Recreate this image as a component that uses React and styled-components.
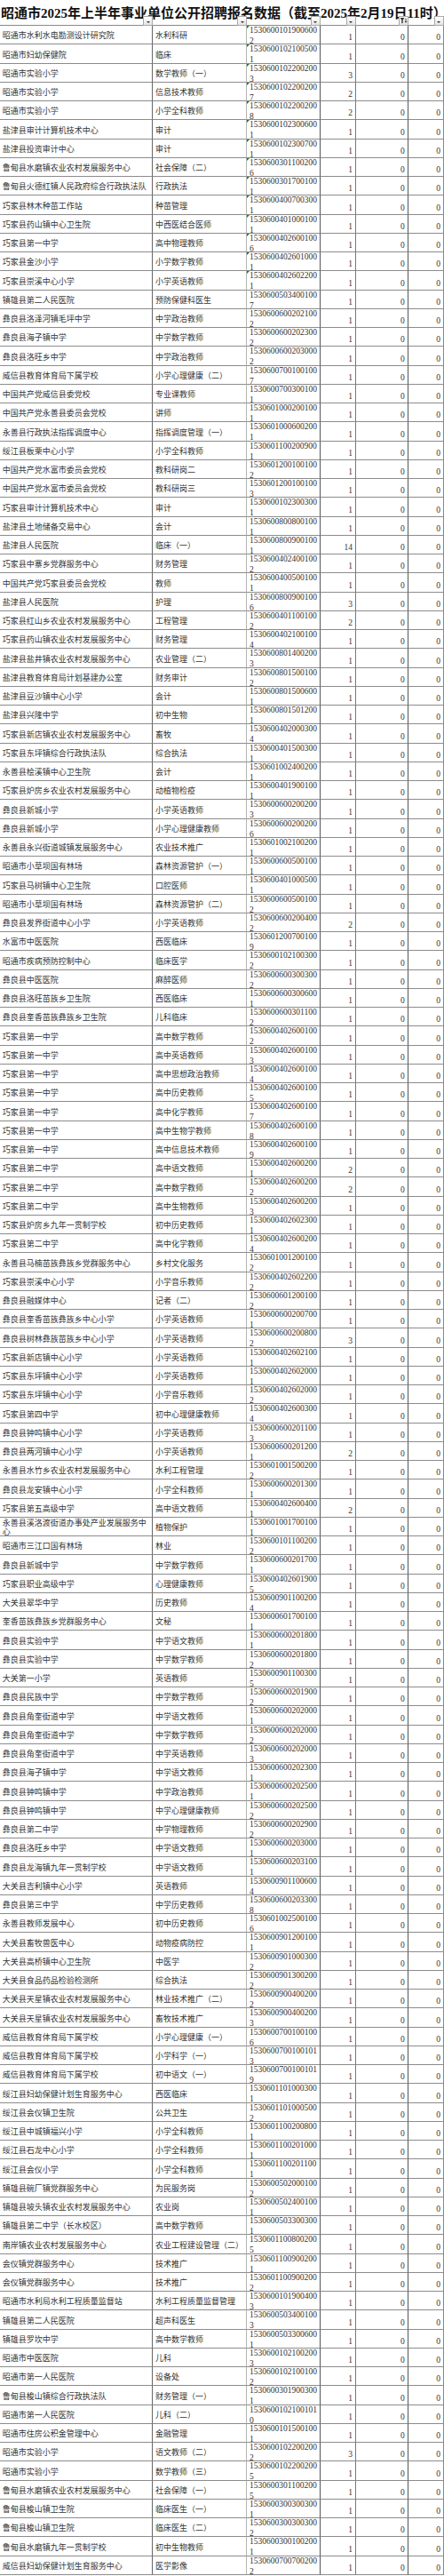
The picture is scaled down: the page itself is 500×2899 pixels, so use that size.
import React from 'react'
import styled, { createGlobalStyle } from 'styled-components'

const COLUMNS = '172.3px 106px 82.4px 40.3px 58.7px 40.3px'
const ROW_HEIGHT = '21.26px'

const RAW = `昭通市水利水电勘测设计研究院|水利科研|15306001019006002|1
昭通市妇幼保健院|临床|15306001021005001|1
昭通市实验小学|数学教师（一）|15306001022002003|3
昭通市实验小学|信息技术教师|15306001022002007|2
昭通市实验小学|小学全科教师|15306001022002008|2
盐津县审计计算机技术中心|审计|15306001023006001|1
盐津县投资审计中心|审计|15306001023007001|1
鲁甸县水磨镇农业农村发展服务中心|社会保障（二）|15306003011002006|1
鲁甸县火德红镇人民政府综合行政执法队|行政执法|15306003017001001|1
巧家县林木种苗工作站|种苗管理|15306004007003001|1
巧家县药山镇中心卫生院|中西医结合医师|15306004010001001|1
巧家县第一中学|高中物理教师|15306004026001006|1
巧家县金沙小学|小学数学教师|15306004026010001|1
巧家县崇溪中心小学|小学英语教师|15306004026022001|1
镇雄县第二人民医院|预防保健科医生|15306005034001007|1
彝良县洛泽河镇毛坪中学|中学政治教师|15306006002021002|1
彝良县海子镇中学|中学数学教师|15306006002023002|1
彝良县洛旺乡中学|中学政治教师|15306006002030002|1
威信县教育体育局下属学校|小学心理健康（二）|15306007001001007|1
中国共产党威信县委党校|专业课教师|15306007003001001|1
中国共产党永善县委员会党校|讲师|15306010002001001|1
永善县行政执法指挥调度中心|指挥调度管理（一）|15306010006002001|1
绥江县板栗中心小学|小学全科教师|15306011002009001|1
中国共产党水富市委员会党校|教科研岗二|15306012001001002|1
中国共产党水富市委员会党校|教科研岗三|15306012001001003|1
巧家县审计计算机技术中心|审计|15306001023003001|1
盐津县土地储备交易中心|会计|15306008008001001|1
盐津县人民医院|临床（一）|15306008009001001|14
巧家县中寨乡党群服务中心|财务管理|15306004024001002|1
中国共产党巧家县委员会党校|教师|15306004005001001|1
盐津县人民医院|护理|15306008009001006|3
巧家县红山乡农业农村发展服务中心|工程管理|15306004011001002|2
巧家县药山镇农业农村发展服务中心|财务管理|15306004021001004|1
盐津县盐井镇农业农村发展服务中心|农业管理（二）|15306008014002003|1
盐津县教育体育局计划基建办公室|财务审计|15306008015001002|1
盐津县豆沙镇中心小学|会计|15306008015006001|1
盐津县兴隆中学|初中生物|15306008015012001|1
巧家县新店镇农业农村发展服务中心|畜牧|15306004020003004|1
巧家县东坪镇综合行政执法队|综合执法|15306004015003001|1
永善县桧溪镇中心卫生院|会计|15306010024002001|1
巧家县炉房乡农业农村发展服务中心|动植物检疫|15306004019001001|1
彝良县新城小学|小学英语教师|15306006002002003|1
彝良县新城小学|小学心理健康教师|15306006002002006|1
永善县永兴街道城镇发展服务中心|农业技术推广|15306010021002001|1
昭通市小草坝国有林场|森林资源管护（一）|15306006005001001|1
巧家县马树镇中心卫生院|口腔医师|15306004010005001|1
昭通市小草坝国有林场|森林资源管护（二）|15306006005001002|1
彝良县发界街道中心小学|小学英语教师|15306006002004002|2
水富市中医医院|西医临床|15306012007001009|1
昭通市疾病预防控制中心|临床医学|15306001021003002|1
彝良县中医医院|麻醉医师|15306006003003002|1
彝良县洛旺苗族乡卫生院|西医临床|15306006003006001|1
彝良县奎香苗族彝族乡卫生院|儿科临床|15306006003011002|1
巧家县第一中学|高中数学教师|15306004026001002|1
巧家县第一中学|高中英语教师|15306004026001003|1
巧家县第一中学|高中思想政治教师|15306004026001004|1
巧家县第一中学|高中历史教师|15306004026001005|1
巧家县第一中学|高中化学教师|15306004026001007|1
巧家县第一中学|高中生物学教师|15306004026001008|1
巧家县第一中学|高中信息技术教师|15306004026001009|1
巧家县第二中学|高中语文教师|15306004026002001|2
巧家县第二中学|高中数学教师|15306004026002002|2
巧家县第二中学|高中生物教师|15306004026002003|1
巧家县炉房乡九年一贯制学校|初中历史教师|15306004026023001|1
巧家县第二中学|高中化学教师|15306004026002004|1
永善县马楠苗族彝族乡党群服务中心|乡村文化服务|15306010012001002|1
巧家县崇溪中心小学|小学音乐教师|15306004026022002|1
彝良县融媒体中心|记者（二）|15306006012001002|1
彝良县奎香苗族彝族乡中心小学|小学英语教师|15306006002007001|1
彝良县树林彝族苗族乡中心小学|小学英语教师|15306006002008002|3
巧家县新店镇中心小学|小学英语教师|15306004026021001|1
巧家县东坪镇中心小学|小学英语教师|15306004026020001|1
巧家县东坪镇中心小学|小学音乐教师|15306004026020002|1
巧家县第四中学|初中心理健康教师|15306004026003004|1
彝良县钟鸣镇中心小学|小学英语教师|15306006002011003|1
彝良县两河镇中心小学|小学英语教师|15306006002012001|2
永善县水竹乡农业农村发展服务中心|水利工程管理|15306010015002002|1
彝良县龙安镇中心小学|小学全科教师|15306006002013001|1
巧家县第五高级中学|高中语文教师|15306004026004001|2
永善县溪洛渡街道办事处产业发展服务中心|植物保护|15306010017001001|1
昭通市三江口国有林场|林业|15306001011002002|1
彝良县新城中学|中学数学教师|15306006002017001|1
巧家县职业高级中学|心理健康教师|15306004026019005|1
大关县翠华中学|历史教师|15306009011002004|1
奎香苗族彝族乡党群服务中心|文秘|15306006017001001|1
彝良县实验中学|中学语文教师|15306006002018001|1
彝良县实验中学|中学数学教师|15306006002018002|1
大关第一小学|英语教师|15306009011003005|1
彝良县民族中学|中学数学教师|15306006002019002|1
彝良县角奎街道中学|中学语文教师|15306006002020001|1
彝良县角奎街道中学|中学数学教师|15306006002020002|1
彝良县角奎街道中学|中学英语教师|15306006002020003|1
彝良县海子镇中学|中学语文教师|15306006002023001|1
彝良县钟鸣镇中学|中学政治教师|15306006002025001|1
彝良县钟鸣镇中学|中学心理健康教师|15306006002025002|1
彝良县第二中学|中学物理教师|15306006002029002|1
彝良县洛旺乡中学|中学语文教师|15306006002030001|1
彝良县龙海镇九年一贯制学校|中学语文教师|15306006002031001|1
大关县吉利镇中心小学|英语教师|15306009011006004|1
彝良县第三中学|中学历史教师|15306006002033008|1
永善县教师发展中心|初中历史教师|15306010025001006|1
大关县畜牧兽医中心|动物疫病防控|15306009012001001|1
大关县高桥镇中心卫生院|中医学|15306009010003002|1
大关县食品药品检验检测所|综合执法|15306009013002002|1
大关县天星镇农业农村发展服务中心|林业技术推广（二）|15306009004002002|1
大关县天星镇农业农村发展服务中心|畜牧技术推广|15306009004002003|1
威信县教育体育局下属学校|小学心理健康（一）|15306007001001006|1
威信县教育体育局下属学校|小学科学（一）|15306007001001013|1
威信县教育体育局下属学校|初中语文（一）|15306007001001019|1
绥江县妇幼保健计划生育服务中心|西医临床|15306011010003001|1
绥江县会仪镇卫生院|公共卫生|15306011010005002|1
绥江县中城镇福兴小学|小学全科教师|15306011002008001|1
绥江县石龙中心小学|小学全科教师|15306011002010001|1
绥江县会仪小学|小学全科教师|15306011002011001|1
镇雄县碗厂镇党群服务中心|为民服务岗|15306005020001002|1
镇雄县坡头镇农业农村发展服务中心|农业岗|15306005024001001|1
镇雄县第二中学（长水校区）|高中数学教师|15306005033003001|1
南岸镇农业农村发展服务中心|农业工程建设管理（二）|15306011008002005|1
会仪镇党群服务中心|技术推广|15306011009002001|1
会仪镇党群服务中心|技术推广|15306011009002002|1
昭通市水利局水利工程质量监督站|水利工程质量监督管理|15306001019004003|1
镇雄县第二人民医院|超声科医生|15306005034001003|1
镇雄县罗坎中学|高中数学教师|15306005033006001|1
昭通市中医医院|儿科|15306001021002003|1
昭通市第一人民医院|设备处|15306001021001002|1
鲁甸县梭山镇综合行政执法队|财务管理（一）|15306003019003001|1
昭通市第一人民医院|儿科（二）|15306001021001010|1
昭通市住房公积金管理中心|金融管理|15306001015001001|1
昭通市实验小学|语文教师（二）|15306001022002002|3
昭通市实验小学|数学教师（三）|15306001022002005|1
鲁甸县水磨镇农业农村发展服务中心|社会保障（一）|15306003011002005|1
鲁甸县梭山镇卫生院|临床医生（一）|15306003003003001|1
鲁甸县梭山镇卫生院|临床医生（二）|15306003003003002|1
鲁甸县水磨镇九年一贯制学校|初中生物教师|15306003001002001|1
威信县妇幼保健计划生育服务中心|医学影像|15306007007002002|1`

const ROWS = RAW.split('\n').map(line => {
  const [unit, post, code, plan] = line.split('|')
  return { unit, post, code, plan }
})

// the first 14 codes still carry excel's "number stored as text" marker
const FLAGGED = 14

const GlobalStyle = createGlobalStyle`
  html, body {
    margin: 0;
    padding: 0;
    background: #fff;
  }
  body {
    font-family: "Liberation Serif", "Noto Sans CJK SC", serif;
    color: #222;
  }
`

const Sheet = styled.div`
  width: 500px;
  overflow: hidden;
`

const HeaderRow = styled.div`
  display: grid;
  grid-template-columns: ${COLUMNS};
  grid-template-rows: 29px;
  box-sizing: border-box;
  height: 29px;
  border-bottom: 1px solid #8a8a8a;
`

const Title = styled.h1`
  grid-column: 1 / -1;
  grid-row: 1;
  margin: 0;
  padding: 6px 0 0 1px;
  font-family: "Liberation Serif", "Noto Sans CJK SC", serif;
  font-size: 15px;
  line-height: 18px;
  font-weight: 700;
  color: #111;
  white-space: nowrap;
`

const FilterButton = styled.div`
  grid-column: ${p => p.$col};
  grid-row: 1;
  justify-self: end;
  align-self: end;
  box-sizing: border-box;
  width: 11px;
  height: 11px;
  border: 1px solid #a9a9a9;
  background: linear-gradient(#ffffff, #e4e4e4);
  display: flex;
  align-items: center;
  justify-content: center;

  &::after {
    content: ${p => (p.$active ? 'none' : "''")};
    margin-top: 2px;
    border-left: 2.5px solid transparent;
    border-right: 2.5px solid transparent;
    border-top: 2.5px solid #333;
  }
`

const Body = styled.div`
  display: flex;
  flex-direction: column;
`

const Row = styled.div`
  display: grid;
  grid-template-columns: ${COLUMNS};
  height: ${ROW_HEIGHT};
`

const BaseCell = styled.div`
  box-sizing: border-box;
  height: ${ROW_HEIGHT};
  overflow: hidden;
  border-bottom: 1px solid #8c8c8c;
  border-right: 1px solid ${p => p.$line || '#666'};
`

const TextCell = styled(BaseCell)`
  display: flex;
  align-items: center;
  padding: 3px 1px 0 2.7px;
  font-family: "Noto Sans CJK SC", sans-serif;
  font-size: 9px;
  line-height: 10.5px;
  color: #333;
`

const CodeCell = styled(BaseCell)`
  position: relative;
  padding-left: 2.7px;
  font-size: 9.5px;
  line-height: 12px;
  word-break: break-all;
  color: #333;

  &::before {
    content: ${p => (p.$flag ? "''" : 'none')};
    position: absolute;
    top: 0;
    left: 0;
    border-top: 3px solid #1d7a28;
    border-right: 3px solid transparent;
  }
`

const CodeText = styled.div`
  margin-top: -1px;
`

const NumberCell = styled(BaseCell)`
  display: flex;
  align-items: flex-end;
  justify-content: flex-end;
  padding: 0 3px 1px 0;
  font-size: 9.5px;
  line-height: 11px;
  color: #333;
`

const FunnelIcon = () => (
  <svg width="9" height="9" viewBox="0 0 9 9">
    <path d="M0.5 1h5L3.7 3.6v3.2L2.3 7.6V3.6z" fill="#333" />
    <path d="M7 1.5v4.5M5.9 4.9L7 6.3l1.1-1.4" stroke="#333" strokeWidth="0.9" fill="none" />
  </svg>
)

const DataRow = ({ row, flagged }) => (
  <Row>
    <TextCell $line="#666">{row.unit}</TextCell>
    <TextCell $line="#b4b4b4">{row.post}</TextCell>
    <CodeCell $line="#555" $flag={flagged}>
      <CodeText>{row.code}</CodeText>
    </CodeCell>
    <NumberCell $line="#777">{row.plan}</NumberCell>
    <NumberCell $line="#555">0</NumberCell>
    <NumberCell $line="#888">0</NumberCell>
  </Row>
)

const App = () => (
  <>
    <GlobalStyle />
    <Sheet>
      <HeaderRow>
        <Title>昭通市2025年上半年事业单位公开招聘报名数据（截至2025年2月19日11时）</Title>
        <FilterButton $col={1} />
        <FilterButton $col={2} />
        <FilterButton $col={3} />
        <FilterButton $col={4} />
        <FilterButton $col={5} $active>
          <FunnelIcon />
        </FilterButton>
        <FilterButton $col={6} />
      </HeaderRow>
      <Body>
        {ROWS.map((row, i) => (
          <DataRow key={i} row={row} flagged={i < FLAGGED} />
        ))}
      </Body>
    </Sheet>
  </>
)

export default App
